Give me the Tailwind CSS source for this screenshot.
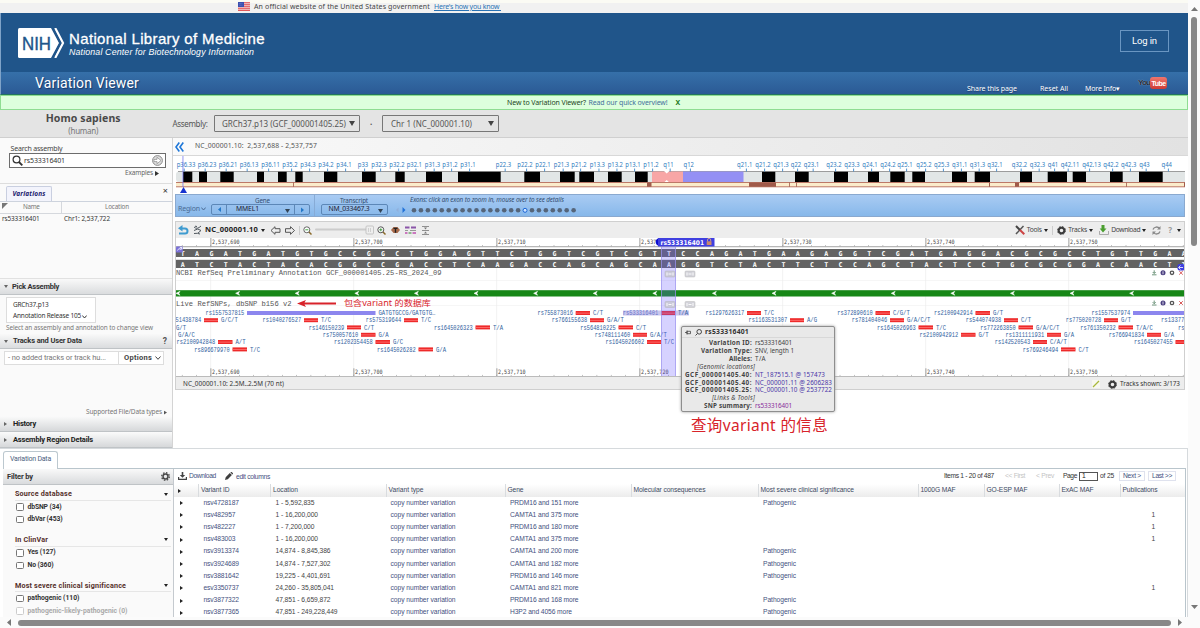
<!DOCTYPE html>
<html lang="en">
<head>
<meta charset="utf-8">
<title>Variation Viewer</title>
<script src="https://cdn.jsdelivr.net/npm/@tailwindcss/browser@4"></script>
</head>
<body class="bg-white">
<div class="grid h-[628px] w-[1200px] grid-cols-[1188px_12px] grid-rows-[617px_11px] overflow-hidden bg-white font-['Noto_Sans',sans-serif] text-[7px] leading-none text-[#444] whitespace-nowrap">

<main class="flex h-[617px] flex-col overflow-hidden">
  <!-- government banner -->
  <div class="flex h-[13px] shrink-0 items-center border-t-[3px] border-[#fbfbf4] bg-[#f1f1f1] pl-[238px] pb-[3px] text-[#444]">
    <svg class="mr-[4px] h-[9px] w-[12px] shrink-0" viewBox="0 0 12 9"><rect width="12" height="9" fill="#f3c9c9"/><path d="M0 .7h12M0 2.7h12M0 4.7h12M0 6.7h12M0 8.5h12" stroke="#e0575a" stroke-width="1"/><rect width="6" height="5" fill="#3b4fb0"/><path d="M1 1.5h4M1 3.2h4" stroke="#9fb0e0" stroke-width=".5" stroke-dasharray=".6 .7"/></svg>
    <span data-fit="176">An official website of the United States government</span>
    <span class="ml-[4px] text-[#2a73b5] underline" data-fit="67">Here's how you know&nbsp;</span>
  </div>

  <!-- NLM header -->
  <header class="flex h-[59px] shrink-0 items-center justify-between border-l border-[#7fa3c8] bg-[#20558a] pl-[17px] pr-[19px] text-white">
    <div class="flex items-center">
      <svg class="h-[30px] w-[47px]" viewBox="0 0 47 30"><path d="M1.5 0H33L41 15 33 30H1.5Q0 30 0 28.500V1.500Q0 0 1.500 0Z" fill="#fff"/><path d="M37.200 0l7.800 15-7.800 15" fill="none" stroke="#fff" stroke-width="2.200"/><path d="M34.600 0l7.800 15-7.800 15" fill="none" stroke="#20558a" stroke-width="1.600"/><text x="4" y="21.500" font-family="Liberation Sans" font-size="18.500" fill="#20558a" stroke="#20558a" stroke-width=".4" textLength="29" lengthAdjust="spacingAndGlyphs">NIH</text></svg>
      <div class="ml-[4px] mb-[-3px] flex flex-col font-['Liberation_Sans',sans-serif]">
        <span class="self-start text-[15px] leading-[16px] [-webkit-text-stroke:0.3px_white]" data-fit="196">National Library of Medicine</span>
        <span class="self-start text-[8.8px] leading-[11px] italic" data-fit="185">National Center for Biotechnology Information</span>
      </div>
    </div>
    <div class="mt-[-4px] flex h-[22px] w-[49px] items-center justify-center border border-[#6a96c2] text-[9.5px] text-white"><span class="font-['Roboto',sans-serif]" data-fit="25">Log in</span></div>
  </header>

  <!-- application title bar -->
  <div class="flex h-[23px] shrink-0 items-center border-b border-[#23765f] border-l border-l-[#7fa3c8] bg-gradient-to-b from-[#3670a9] to-[#2b5a95] pl-[34px] text-white">
    <span class="font-['Roboto',sans-serif] text-[14px] [text-shadow:1px_1px_1px_#16396a]" data-fit="104">Variation Viewer</span>
    <div class="ml-auto flex items-center pt-[10px] text-[7px] [text-shadow:0_1px_1px_#16396a]">
      <span class="w-[73px]"><span data-fit="50">Share this page</span></span>
      <span class="w-[45px]"><span data-fit="28">Reset All</span></span>
      <span class="w-[53px]"><span data-fit="35">More Info▾</span></span>
    </div>
    <!-- YouTube badge -->
    <div class="mr-[20px] flex h-[12px] w-[30px] shrink-0 items-center font-['Liberation_Sans',sans-serif] text-[8px] font-bold">
      <span class="w-[12px] text-[#1f2b3a] [text-shadow:0_0_1px_#b9c8d8]" data-fit="12">You</span>
      <span class="flex h-[12px] w-[17px] items-center justify-center rounded-[3px] bg-gradient-to-b from-[#f0756c] to-[#cf3a35] text-[7px] text-white"><span data-fit="14">Tube</span></span>
    </div>
  </div>

  <div class="flex h-[15px] shrink-0 items-center border border-[#8fdd92] bg-[#ddffdd] pl-[506px] text-[7px]">
    <span class="text-[#1d451d]" data-fit="79">New to Variation Viewer?</span>
    <span class="ml-[2.500px] text-[#44709c]" data-fit="79">Read our quick overview!</span>
    <span class="ml-[8px] font-bold text-[#1c7a1c]">X</span>
  </div>

  <!-- organism and assembly -->
  <div class="flex h-[28px] shrink-0 items-center border-b border-[#cfcfcf] bg-[#e4e4e4] text-[#555]">
    <div class="flex w-[172.500px] shrink-0 flex-col items-center">
      <span class="mr-[6px] text-[10.500px] leading-[13px] font-bold text-[#4a4a4a]" data-fit="75">Homo sapiens</span>
      <span class="mr-[6px] text-[8px] leading-[11px] text-[#777]" data-fit="30">(human)</span>
    </div>
    <span class="text-[8px]" data-fit="35">Assembly:</span>
    <div class="ml-[6.500px] flex h-[17px] w-[146px] items-center justify-between rounded-[1px] border border-[#777] pl-[7px] pr-[4px] text-[8px]"><span data-fit="124">GRCh37.p13 (GCF_000001405.25)</span><svg class="h-[5px] w-[6px]" viewBox="0 0 6 5"><path d="M0 0h6L3 5z" fill="#444"/></svg></div>
    <span class="w-[22px] text-center text-[8px] font-bold">·</span>
    <div class="flex h-[17px] w-[117px] items-center justify-between rounded-[1px] border border-[#777] pl-[8px] pr-[4px] text-[8px]"><span data-fit="81">Chr 1 (NC_000001.10)</span><svg class="h-[5px] w-[6px]" viewBox="0 0 6 5"><path d="M0 0h6L3 5z" fill="#444"/></svg></div>
  </div>

  <div class="flex h-[310px] shrink-0">
    <!-- left sidebar -->
    <aside class="flex w-[173px] shrink-0 flex-col border-r border-[#d4d4d4] bg-[#fafafa]">
      <div class="flex h-[46px] shrink-0 flex-col border-b border-[#ddd] pt-[6px] pl-[9px]">
        <span class="ml-[1.500px] text-[7px] leading-[9px] self-start" data-fit="52">Search assembly</span>
        <div class="flex h-[15px] w-[157px] items-center border border-[#6d6d6d] bg-white px-[2px]">
          <svg class="h-[11px] w-[11px]" viewBox="0 0 11 11" fill="none" stroke="#333"><circle cx="4.500" cy="4.500" r="3.400" stroke-width="1.200"/><path d="M7 7l3.300 3.300" stroke-width="1.800"/></svg>
          <span class="ml-[1px] text-[7px] text-[#333]" data-fit="41">rs533316401</span>
          <svg class="ml-auto h-[11px] w-[11px]" viewBox="0 0 11 11"><circle cx="5.500" cy="5.500" r="4.900" fill="#ddd" stroke="#8b8b8b" stroke-width="1"/><path d="M2 4.400h3V2.300l4 3.200-4 3.200V6.600H2z" fill="#fff" stroke="#8b8b8b" stroke-width=".7"/></svg>
        </div>
        <div class="mt-[2px] flex items-center pl-[116px] text-[6.500px] text-[#666]"><span data-fit="28">Examples</span><svg class="ml-[2px] h-[5px] w-[4px]" viewBox="0 0 4 5"><path d="M0 0l4 2.500L0 5z" fill="#333"/></svg></div>
      </div>
      <div class="flex h-[18px] shrink-0 items-end justify-between border-b border-[#cdd3dd] pl-[6px] pr-[4px]">
        <div class="flex h-[15px] w-[46px] items-center justify-center rounded-t-[2px] border border-b-0 border-[#c9cfe0] bg-[#f3f4fc] font-bold italic text-[#1a1a6e]"><span class="text-[6.500px]" data-fit="33">Variations</span></div>
        <span class="mb-[6px] text-[9px] text-[#333]">×</span>
      </div>
      <div class="flex h-[12px] shrink-0 border-b border-[#d5d8dd] text-[6.300px] text-[#777]">
        <div class="flex w-[62px] items-center border-r border-[#d5d8dd] pl-[2px]"><svg class="mb-[3px] h-[6px] w-[6px]" viewBox="0 0 6 6"><path d="M0 0h6L0 6z" fill="#777"/></svg><span class="ml-[15px]" data-fit="16.500">Name</span></div>
        <div class="flex flex-1 items-center justify-center"><span data-fit="24">Location</span></div>
      </div>
      <div class="flex h-[64px] shrink-0 pt-[2px] pl-[2px] text-[6.400px] text-[#333]"><span class="w-[62px]"><span data-fit="37.500">rs533316401</span></span><span data-fit="46">Chr1: 2,537,722</span></div>

      <div class="flex h-[17px] shrink-0 items-center border-t border-[#e1e1e1] border-b border-b-[#bfc3c6] bg-gradient-to-b from-[#f9f9f9] to-[#dadcde] pl-[4px] font-['Roboto',sans-serif] text-[7.500px] font-bold text-[#333]"><svg class="mr-[4px] h-[3px] w-[4px]" viewBox="0 0 4 3"><path d="M0 0h4L2 3z" fill="#666"/></svg><span data-fit="47">Pick Assembly</span></div>
      <div class="flex h-[39px] shrink-0 flex-col pl-[6px] pt-[2px]">
        <div class="flex h-[26px] w-[90px] flex-col justify-around border border-[#ddd] bg-white pt-[2px] pb-[1px] pl-[6px] text-[6.500px] text-[#333]"><span class="self-start" data-fit="35.500">GRCh37.p13</span><span class="flex items-center"><span data-fit="68">Annotation Release 105</span><svg class="ml-[1px] mt-[2px] h-[4px] w-[5px]" viewBox="0 0 5 4"><path d="M.3.5l2.200 2.500L4.700.5" fill="none" stroke="#333"/></svg></span></div>
        <span class="mt-[1.500px] self-start text-[6.400px] text-[#777]" data-fit="147">Select an assembly and annotation to change view</span>
      </div>
      <div class="flex h-[15px] shrink-0 items-center border-b border-[#bfc3c6] bg-gradient-to-b from-[#f9f9f9] to-[#dadcde] pl-[4px] pr-[5px] font-['Roboto',sans-serif] text-[7.500px] font-bold text-[#333]"><svg class="mr-[5px] h-[3px] w-[4px]" viewBox="0 0 4 3"><path d="M0 0h4L2 3z" fill="#666"/></svg><span data-fit="69">Tracks and User Data</span><span class="ml-auto text-[8.500px] text-[#555]">?</span></div>
      <div class="flex h-[67px] shrink-0 flex-col pl-[4px] pt-[2px]">
        <div class="flex h-[14px] w-[160px] border border-[#ddd] bg-white font-['Roboto',sans-serif]">
          <span class="flex w-[114px] items-center border-r border-[#ddd] pl-[3px] text-[7.500px] text-[#777]"><span data-fit="98">- no added tracks or track hu...</span></span>
          <span class="flex flex-1 items-center justify-between pl-[5px] pr-[2px] text-[7.500px] font-bold text-[#444]"><span data-fit="28">Options</span><svg class="h-[4px] w-[6px]" viewBox="0 0 6 4"><path d="M.5.5L3 3.300 5.500.5" fill="none" stroke="#444"/></svg></span>
        </div>
        <div class="mt-auto mb-[1px] flex items-center pl-[82px] text-[6.500px] text-[#777]"><span data-fit="76">Supported File/Data types</span><svg class="ml-[2px] mt-[1px] h-[5px] w-[3px]" viewBox="0 0 4 5"><path d="M0 0l4 2.500L0 5z" fill="#555"/></svg></div>
      </div>
      <div class="flex h-[16px] shrink-0 items-center border-b border-[#bfc3c6] bg-gradient-to-b from-[#fbfbfb] to-[#d6d8da] pl-[4px] font-['Roboto',sans-serif] text-[7.500px] font-bold text-[#222]"><svg class="mr-[6px] h-[4px] w-[3px]" viewBox="0 0 3 4"><path d="M0 0l3 2L0 4z" fill="#666"/></svg><span data-fit="23">History</span></div>
      <div class="flex h-[16px] shrink-0 items-center border-b border-[#bfc3c6] bg-gradient-to-b from-[#fbfbfb] to-[#d6d8da] pl-[4px] font-['Roboto',sans-serif] text-[7.500px] font-bold text-[#222]"><svg class="mr-[6px] h-[4px] w-[3px]" viewBox="0 0 3 4"><path d="M0 0l3 2L0 4z" fill="#666"/></svg><span data-fit="80">Assembly Region Details</span></div>
    </aside>

    <!-- genome browser -->
    <section class="flex w-[1015px] flex-col">
      <div class="flex h-[18px] shrink-0 items-center border-b border-[#d8d8d8] bg-gradient-to-r from-[#fafafa] via-[#eee] to-[#e2e2e2] pl-[2px] text-[#555]">
        <svg class="h-[10px] w-[9px]" viewBox="0 0 9 10" fill="none" stroke="#1f77d8" stroke-width="1.600"><path d="M4.300.5L1 5l3.300 4.500M8.300.5L5 5l3.300 4.500"/></svg>
        <span class="ml-[11px] text-[6.800px]" data-fit="122">NC_000001.10:&nbsp; 2,537,688 - 2,537,757</span>
      </div>
      <svg id="ideogram" class="h-[38px] w-[1015px] shrink-0" viewBox="173 156 1015 38"></svg>

      <div class="ml-[2px] flex h-[23px] w-[1010px] shrink-0 items-end border border-[#8aa9cf] bg-gradient-to-b from-[#a9cbf3] to-[#87b8ea] text-[7px] text-[#334e70]">
        <div class="mb-[3px] ml-[2px] flex h-[9px] w-[33px] items-center text-[#4a6a93]"><span data-fit="22">Region</span><svg class="ml-[1px] h-[4px] w-[5px]" viewBox="0 0 5 4"><path d="M.3.5l2.200 2.500L4.700.5" fill="none" stroke="#4a6a93"/></svg></div>
        <div class="flex h-full w-[104px] flex-col items-center border-r border-[#87abd6] text-[6.300px]">
          <span class="mt-[2.500px]" data-fit="15">Gene</span>
          <div class="mr-[4px] mt-auto flex h-[11px] w-[99px] mb-[1px] items-center rounded-[2px] border border-[#5c87b7] text-[6.800px] text-[#223]"><span class="flex h-full w-[15px] items-center justify-center border-r border-[#5c87b7]"><svg class="h-[5px] w-[3px]" viewBox="0 0 3 5"><path d="M3 0v5L0 2.500z" fill="#2478c8"/></svg></span><span class="flex h-full flex-1 items-center justify-between pl-[9px] pr-[4px]"><span data-fit="23">MMEL1</span><svg class="mt-[2px] h-[4px] w-[5px]" viewBox="0 0 5 4"><path d="M0 0h5L2.500 4z" fill="#345"/></svg></span><span class="flex h-full w-[15px] items-center justify-center border-l border-[#5c87b7]"><svg class="h-[6px] w-[3px]" viewBox="0 0 3 5"><path d="M0 0v5l3-2.500z" fill="#2478c8"/></svg></span></div>
        </div>
        <div class="flex h-full w-[78px] flex-col items-center text-[6.300px]">
          <span class="mt-[2.500px]" data-fit="28">Transcript</span>
          <div class="mt-auto mb-[1px] flex h-[11px] w-[67px] items-center justify-between rounded-[2px] border border-[#5c87b7] pl-[7px] pr-[4px] text-[6.800px] text-[#223]"><span data-fit="41">NM_033467.3</span><svg class="mt-[2px] h-[4px] w-[5px]" viewBox="0 0 5 4"><path d="M0 0h5L2.500 4z" fill="#345"/></svg></div>
        </div>
        <div class="flex h-full flex-col pl-[2px]">
          <span class="mt-[2px] ml-[15px] self-start text-[6.300px] italic" data-fit="154">Exons: click an exon to zoom in, mouse over to see details</span>
          <svg id="exons" class="mt-auto mb-[2px] h-[8px] w-[184px]" viewBox="395 206 184 8"></svg>
        </div>
      </div>

      <div class="mt-[4px] ml-[2px] flex h-[169px] w-[1010px] shrink-0 flex-col border border-[#cfcfcf]">
        <div class="flex h-[16px] shrink-0 items-center bg-[#ededed] pl-[2px] pr-[3px] text-[6.700px] text-[#444]">
          <svg class="h-[10px] w-[11px]" viewBox="0 0 11 10" fill="none" stroke="#3f9bd0" stroke-width="2"><path d="M1 8.500h6a2.500 2.500 0 0 0 0-5H3"/><path d="M4.500 0v6.500L0 3.300z" fill="#3f9bd0" stroke="none"/></svg>
          <svg class="ml-[4px] h-[10px] w-[9px]" viewBox="0 0 9 10" fill="none" stroke="#50585f" stroke-width="1"><path d="M1 2q3 3 7-1M1 5.500q4-3 7 0M1 8.500q4 1 7-3M2 1.200l2 .3M5 8.500l2 .5"/></svg>
          <span class="ml-[3px] text-[7.500px] font-bold text-[#222]" data-fit="53">NC_000001.10</span>
          <svg class="ml-[3px] h-[3px] w-[4px]" viewBox="0 0 4 3"><path d="M0 0h4L2 3z" fill="#222"/></svg>
          <svg class="ml-[5px] h-[9px] w-[26px]" viewBox="0 0 26 9" fill="none" stroke="#555" stroke-width="1"><path d="M1 4.500L5 .7v2h5v3.600H5v2zM24.500 4.500l-4-3.800v2h-5v3.600h5v2z"/></svg>
          <span class="mx-[3px] h-[9px] w-px bg-[#ccc]"></span>
          <svg class="h-[9px] w-[9px]" viewBox="0 0 9 9" fill="none" stroke="#666"><circle cx="3.800" cy="3.800" r="3" fill="#fff"/><path d="M2.300 3.800h3" stroke="#4a4"/><path d="M6 6l2.500 2.500" stroke="#8a6a2a" stroke-width="1.500"/></svg>
          <svg class="ml-[3px] h-[10px] w-[59px]" viewBox="0 0 59 10"><rect x="0" y="3.500" width="52" height="2" rx="1" fill="#ccc"/><rect x="51" y="1" width="7.500" height="8" rx="1" fill="#eee" stroke="#bbb" stroke-width=".8"/><path d="M53.500 3v4M55.500 3v4" stroke="#bbb" stroke-width=".6"/></svg>
          <svg class="ml-[3px] h-[9px] w-[9px]" viewBox="0 0 9 9" fill="none" stroke="#555"><circle cx="3.800" cy="3.800" r="3" fill="#fff"/><path d="M2.300 3.800h3M3.800 2.300v3" stroke="#494"/><path d="M6 6l2.500 2.500" stroke="#8a6a2a" stroke-width="1.500"/></svg>
          <svg class="ml-[5px] h-[8px] w-[9px]" viewBox="0 0 9 8"><path d="M0 4l2.500-3h4L9 4 6.500 7h-4z" fill="#a86a4a"/><path d="M2.500 2.300h4M4.500 2.300v4.500" stroke="#222" stroke-width="1.300"/></svg>
          <svg class="ml-[5px] h-[8px] w-[11px]" viewBox="0 0 11 8"><path d="M0 1.500h4.500M6 1.500h5" stroke="#8a55a8" stroke-width="2"/><path d="M0 4.500h3M5 4.500h6" stroke="#999"/><path d="M0 7h2.500M7.500 7H11" stroke="#c050b0" stroke-width="1.300"/><path d="M3.500 7h3" stroke="#5a9a5a" stroke-width="1.300"/></svg>
          <svg class="ml-[6px] h-[9px] w-[7px]" viewBox="0 0 7 9" stroke="#777" fill="#777"><path d="M0 .5h7M0 4.500h7M0 8.500h7" stroke-width=".8"/><path d="M2 1.500h3L3.500 3.500zM2 7.500h3L3.500 5.500z" stroke="none"/></svg>

          <svg class="ml-auto h-[10px] w-[10px]" viewBox="0 0 10 10" fill="none"><path d="M1 9l7.500-8" stroke="#555" stroke-width="1.500"/><path d="M1 1l4 4" stroke="#444" stroke-width="2"/><path d="M5 5l4.300 4.200" stroke="#c44" stroke-width="2"/></svg>
          <span class="ml-[2px]" data-fit="15">Tools</span><svg class="ml-[2px] h-[3px] w-[4px]" viewBox="0 0 4 3"><path d="M0 0h4L2 3z" fill="#222"/></svg>
          <span class="ml-[4px] mr-[4px] h-[9px] w-px bg-[#ccc]"></span>
          <svg class="h-[9px] w-[9px]" viewBox="-5 -5 10 10"><circle r="3.100" fill="none" stroke="#3c3c3c" stroke-width="2.200"/><circle r="4.400" fill="none" stroke="#3c3c3c" stroke-width="1.100" stroke-dasharray="1.900 1.550"/></svg>
          <span class="ml-[2.500px]" data-fit="19">Tracks</span><svg class="ml-[2px] h-[3px] w-[4px]" viewBox="0 0 4 3"><path d="M0 0h4L2 3z" fill="#222"/></svg>
          <svg class="ml-[6px] h-[10px] w-[10px]" viewBox="0 0 10 10"><path d="M.5 6v3.500h9V6" fill="#eee" stroke="#999" stroke-width=".8"/><path d="M2.500 0h3v3.500h2L4 7.500.7 3.500h1.800z" fill="#4a9e2f"/></svg>
          <span class="ml-[2px]" data-fit="29">Download</span><svg class="ml-[2px] h-[3px] w-[4px]" viewBox="0 0 4 3"><path d="M0 0h4L2 3z" fill="#222"/></svg>
          <svg class="ml-[6px] h-[9px] w-[9px]" viewBox="0 0 9 9" fill="none" stroke="#888" stroke-width="1.300"><path d="M1 3.500C2 .5 6 .3 7.500 2.500M8 5.500C7 8.500 3 8.700 1.500 6.500"/><path d="M8.500 0v3.500H5zM.5 9V5.500H4z" fill="#888" stroke="none"/></svg>
          <span class="ml-[7px] text-[8px] font-bold text-[#999]">?</span><svg class="ml-[5px] h-[3px] w-[4px]" viewBox="0 0 4 3"><path d="M0 0h4L2 3z" fill="#222"/></svg>
        </div>
        <svg id="tracks" class="h-[138px] w-[1008px] shrink-0 bg-white" viewBox="176 238 1008 138"></svg>
        <div class="flex flex-1 items-center border-t border-[#bbb] bg-[#ededed] pl-[7px] pr-[4px] pt-[2px] text-[6.400px] text-[#333]">
          <span data-fit="101">NC_000001.10: 2.5M..2.5M (70 nt)</span>
          <svg class="ml-auto h-[8px] w-[8px]" viewBox="0 0 8 8"><rect width="8" height="8" fill="#f8f8f0"/><path d="M1 7l6-6" stroke="#a9b83a" stroke-width="1.300"/></svg>
          <svg class="ml-[8px] h-[9px] w-[9px]" viewBox="-5 -5 10 10"><circle r="3.100" fill="none" stroke="#3c3c3c" stroke-width="2.200"/><circle r="4.400" fill="none" stroke="#3c3c3c" stroke-width="1.100" stroke-dasharray="1.900 1.550"/></svg>
          <span class="ml-[3px]" data-fit="60">Tracks shown: 3/173</span>
        </div>
      </div>
      <div class="relative h-0 w-0">
        <!-- variant tooltip and its caption -->
        <div class="absolute -top-[64px] left-[508px] h-[86px] w-[154px] rounded-[2px] border border-[#8e8e8e] bg-[#e9e9e9] shadow-[0_0_3px_#999] text-[6.300px] text-[#444]">
          <div class="flex h-[11px] items-center border-b border-[#d8d8d8] pl-[3px] font-bold text-[#333]"><svg class="h-[5px] w-[6px]" viewBox="0 0 6 5"><path d="M0 2.500h2M2 .5v4M2 1.300h3.500v2.400H2z" fill="none" stroke="#444" stroke-width=".8"/></svg><svg class="ml-[4px] h-[7px] w-[7px]" viewBox="0 0 7 7" fill="none" stroke="#444"><circle cx="4.200" cy="2.800" r="2.300"/><path d="M2.500 4.500L.5 6.500"/></svg><span class="ml-[3px] text-[6.800px]" data-fit="44">rs533316401</span></div>
          <div class="grid grid-cols-[70px_80px] gap-x-[3px] pt-[1px] leading-[7.900px]">
            <b class="text-right" data-fit="43">Variation ID:</b><span data-fit="37">rs533316401</span>
            <b class="text-right" data-fit="51">Variation Type:</b><span data-fit="39">SNV, length 1</span>
            <b class="text-right" data-fit="23">Alleles:</b><span data-fit="11">T/A</span>
            <i class="-mr-[3px] text-right" data-fit="58">[Genomic locations]</i><span></span>
            <b class="text-right" data-fit="67">GCF_000001405.40:</b><span class="text-[#4a35a8]" data-fit="70">NT_187515.1 @ 157473</span>
            <b class="text-right" data-fit="67">GCF_000001405.40:</b><span class="text-[#4a35a8]" data-fit="77">NC_000001.11 @ 2606283</span>
            <b class="text-right" data-fit="67">GCF_000001405.25:</b><span class="text-[#4a35a8]" data-fit="77">NC_000001.10 @ 2537722</span>
            <i class="-mr-[3px] text-right" data-fit="43">[Links &amp; Tools]</i><span></span>
            <b class="text-right" data-fit="48">SNP summary:</b><span class="text-[#8a2f9c]" data-fit="37">rs533316401</span>
          </div>
        </div>
        <div class="absolute top-[25px] left-[518px] font-['Noto_Sans','Noto_Sans_CJK_SC',sans-serif] text-[15.500px] leading-[20px] text-[#d8232a]"><span data-fit="137">查询variant 的信息</span></div>
      </div>
    </section>
  </div>

  <!-- variation data -->
  <div class="flex min-h-0 flex-1 flex-col border-t border-r border-[#d6dadd] bg-white pl-[3px]">
    <div class="flex h-[19px] shrink-0 items-end"><div class="z-10 mb-[-1px] flex h-[18px] w-[55px] items-center justify-center rounded-t-[3px] border border-b-0 border-[#bcc8cf] bg-white pb-[2px] font-['Roboto',sans-serif] text-[7px] text-[#4c5f80]"><span data-fit="41">Variation Data</span></div></div>
    <div class="mr-[1px] flex min-h-0 flex-1 border-t border-r border-[#b9c5cc]">
      <div class="flex w-[171px] shrink-0 flex-col border-r border-[#c5cacf] bg-[#fafafa] font-['Roboto',sans-serif] font-bold text-[#333]">
        <div class="flex h-[16px] shrink-0 items-center justify-between border-b border-[#bfc3c6] bg-gradient-to-b from-[#f9f9f9] to-[#d9dbdd] pl-[4px] pr-[3px] text-[7.500px]"><span data-fit="26">Filter by</span><svg class="h-[9px] w-[9px]" viewBox="-5 -5 10 10"><circle r="2.700" fill="none" stroke="#4a4a4a" stroke-width="1.700"/><circle r="4.200" fill="none" stroke="#4a4a4a" stroke-width="1.500" stroke-dasharray="1.700 1.600"/></svg></div>
        <div id="facets" class="flex flex-col pl-[12px]"></div>
      </div>
      <div class="flex min-w-0 flex-1 flex-col font-['Liberation_Sans',sans-serif] text-[6.700px] text-[#44507e]">
        <div class="flex h-[15px] shrink-0 items-center pb-[1px] pl-[4px] pr-[9px]">
          <svg class="h-[8px] w-[9px]" viewBox="0 0 9 8"><path d="M.6 5v2.400h7.800V5" fill="none" stroke="#444" stroke-width="1.200"/><path d="M3.700 0h1.600v3h1.900L4.500 5.700 1.800 3h1.900z" fill="#444"/></svg>
          <span class="ml-[2px]" data-fit="27">Download</span>
          <svg class="ml-[9px] h-[8px] w-[8px]" viewBox="0 0 8 8"><path d="M0 8l.7-2.800L4.800 1l2.100 2.100-4.100 4.200zM5.400.5L6 0q.5-.2.900.2l.9.9q.4.400.1.800l-.5.700z" fill="#3e3e3e"/></svg>
          <span class="ml-[3px] mt-[2px]" data-fit="34">edit columns</span>
          <span class="ml-auto text-[#333]" data-fit="50">Items 1 - 20 of 487</span>
          <span class="ml-[11px] w-[31px] text-[#c4c4c4]"><span data-fit="20">&lt;&lt; First</span></span>
          <span class="w-[27px] text-[#c4c4c4]"><span data-fit="18">&lt; Prev</span></span>
          <span class="text-[#333]" data-fit="14">Page</span><span class="ml-[2px] mr-[2px] flex h-[9px] w-[19px] items-center border border-[#555] pl-[2px] text-[#222]">1</span><span class="text-[#333]" data-fit="14">of 25</span>
          <span class="ml-[5px] flex h-[10px] w-[26px] items-center justify-center border border-[#dfe2ee]"><span data-fit="18">Next &gt;</span></span>
          <span class="ml-[3px] flex h-[10px] w-[28px] items-center justify-center border border-[#dfe2ee]"><span data-fit="20">Last &gt;&gt;</span></span>
        </div>
        <div id="thead" class="grid h-[13px] shrink-0 grid-cols-[24px_72px_115.500px_119px_126px_127px_160px_66px_75px_61px_65px] bg-gradient-to-b from-white to-[#ececec] text-[6.700px] text-[#3d4a63]"></div>
        <div id="tbody" class="flex flex-col"></div>
      </div>
    </div>
  </div>
</main>

<!-- vertical scrollbar -->
<div class="flex flex-col items-center bg-[#fbfbfb] pt-[7px]">
  <svg class="h-[4px] w-[7px] shrink-0" viewBox="0 0 7 4"><path d="M0 4h7L3.500 0z" fill="#777"/></svg>
  <div class="mt-[6px] h-[229px] w-[6px] rounded-full bg-[#888]"></div>
  <svg class="mt-auto mb-[8px] h-[4px] w-[7px]" viewBox="0 0 7 4"><path d="M0 0h7L3.500 4z" fill="#777"/></svg>
</div>
<!-- horizontal scrollbar -->
<div class="col-span-2 flex items-center bg-[#fbfbfb] pl-[7px]">
  <svg class="h-[7px] w-[4px]" viewBox="0 0 4 7"><path d="M4 0v7L0 3.500z" fill="#777"/></svg>
  <div class="ml-[7px] h-[6px] w-[1153px] rounded-full bg-[#888]"></div>
  <svg class="ml-[7px] h-[7px] w-[4px]" viewBox="0 0 4 7"><path d="M0 0v7l4-3.500z" fill="#777"/></svg>
</div>
</div>

<script>
const el = id => document.getElementById(id);
const txt = (x, y, s, o = {}) => `<text x="${x}" y="${y}" font-family="${o.f || 'Noto Sans'}" font-size="${o.z || 6.5}" fill="${o.c || '#444'}"${o.w ? ` textLength="${o.w}" lengthAdjust="spacingAndGlyphs"` : ''}${o.a ? ` text-anchor="${o.a}"` : ''}${o.b ? ' font-weight="bold"' : ''}>${s}</text>`;
const rect = (x, y, w, h, c, e = '') => `<rect x="${x}" y="${y}" width="${w}" height="${h}" fill="${c}" ${e}/>`;

// chromosome ideogram
{
  const bands = [[183,192.3],[199,207],[220.3,233.7],[257,264],[278,286.7],[295.3,302.7],[324,337.3],[362,375.7],[395.3,404.7],[426,442],[458,500.7],[524.3,540],[560,574.7],[579.3,594],[608,621.7],[635,647.7],[762,775.3],[795,808.7],[834,848],[868,879],[890.3,904.7],[912.3,925],[952,967],[974.7,990],[1020,1032],[1047.7,1067],[1072.7,1086],[1110,1122.7],[1139,1162.7]];
  const labels = [['p36.33',186],['p36.23',207],['p36.21',228],['p36.13',249],['p36.11',270.5],['p35.2',290],['p34.3',308],['p34.2',326],['p34.1',344],['p33',363],['p32.3',379],['p32.2',397],['p32.1',414.3],['p31.3',432.5],['p31.2',450],['p31.1',468],['p22.3',503.5],['p22.2',525],['p22.1',543],['p21.3',561.5],['p21.2',579],['p13.3',597.3],['p13.2',615.3],['p13.1',633],['p11.2',651],['q11',668.5],['q12',688.7],['q21.1',744.7],['q21.2',763],['q21.3',781],['q22',796],['q23.1',811.5],['q23.2',834],['q23.3',852],['q24.1',870],['q24.2',888],['q25.1',905],['q25.2',924],['q25.3',941.7],['q31.1',959.7],['q31.3',977.5],['q32.1',995],['q32.2',1019.5],['q32.3',1037.5],['q41',1053],['q42.11',1070],['q42.13',1091.5],['q42.2',1111],['q42.3',1128.7],['q43',1144.5],['q44',1166.7]];
  let s = rect(176, 171.5, 1009, 10.5, '#e2e6e6', 'rx="3"') + rect(180, 171.5, 1005, 10.5, '#e2e6e6');
  s += '<path d="M178 171.500H1185" stroke="#888" stroke-width=".8"/>';
  bands.forEach(([a, b]) => s += rect(a, 171.8, b - a, 10.2, '#000'));
  s += rect(652, 171.5, 31, 10.5, '#f8a6a6') + rect(683, 171.5, 60.5, 10.5, '#9490f4');
  s += '<path d="M664 171l2.700 2.500 2.700-2.500zM664 182.500l2.700-2.500 2.700 2.500z" fill="#fff"/>';
  s += rect(176, 182.8, 1009, 4, '#fbeccb') + '<path d="M176 182.500h1009M176 186.800h1009" stroke="#b56a58" stroke-width=".9"/>';
  [[293,.8],[647,4.5],[749,27],[789,.8],[796,.8],[989,1],[1015,4],[1126,.8],[1184,1]].forEach(([x, w]) => s += rect(x, 182.5, w, 4.3, '#a05a4a'));
  labels.forEach(([t, x]) => { const w = t.replace('.', '').length * 3.45 + (t.includes('.') ? 1.5 : 0); s += txt(x - w / 2, 166.8, t, {c: '#2f7cc0', w, z: 6.6}); s += rect(x - .3 + (t.length > 5 ? -2 : 1.5), 168.5, .9, 3, '#3c86c8'); });
  s += rect(182, 156, 1.8, 31, '#7a7af0', 'opacity=".45"') + '<path d="M183.500 187l3.500 6h-7z" fill="#1733d0"/>';
  el('ideogram').innerHTML = s;
}

// exon dots
{
  let s = '<path d="M398.500 207.500v5l-2.500-2.500z" fill="#8fb0dc"/><path d="M402.500 207v6l3-3z" fill="#2272d8"/>';
  for (let i = 0; i < 24; i++) { const x = 414 + i * 6.94; s += i === 16 ? `<circle cx="${x}" cy="210.300" r="2" fill="#cfe4ff" stroke="#1a66d8" stroke-width="1"/>` : `<circle cx="${x}" cy="210.300" r="2.300" fill="#55657a"/>`; }
  el('exons').innerHTML = s;
}

// sequence tracks
{
  const P = 14.3, X0 = 210.5, MONO = 'Liberation Mono';
  let s = '';
  const ruler = (y, base) => {
    s += rect(176, base, 1008, .9, '#999');
    for (let i = -2; i < 69; i++) s += rect(X0 + i * P, base - 1.3, .6, 1.3, '#999');
    for (let i = 0; i < 7; i++) { const x = X0 + i * 143; s += rect(x, y - 6, .8, base - y + 6, '#888') + txt(x + 1.5, y, '2,537,' + (690 + 10 * i), {f: 'DejaVu Sans Mono', z: 6, w: 27.5}); }
  };
  for (let i = 0; i < 7; i++) s += rect(X0 + i * 143, 247, .6, 128, '#e9e9e9');
  [281.5, 306].forEach(y => s += rect(176, y - 1, 1008, .5, '#ededed'));
  ruler(244, 246.3);
  ruler(374.3, 376.2);
  s += rect(176, 249, 1008, 8, '#636363') + rect(176, 259.8, 1008, 8.2, '#636363');
  const seq = 'TAGATGATGTGCCGGCTGGAGTTCTGGTCGTCGTTCCAGATGAAGAGGTCGATGAGGACGCGCCTGTTGAA', comp = {A: 'T', T: 'A', G: 'C', C: 'G'};
  [...seq].forEach((c, i) => { const x = 182.8 + i * P; s += txt(x, 255.6, c, {f: 'DejaVu Sans Mono', z: 6.6, c: '#fff', a: 'middle', b: 1}) + txt(x, 266.5, comp[c], {f: 'DejaVu Sans Mono', z: 6.6, c: '#fff', a: 'middle', b: 1}); });
  s += txt(176, 275.3, 'NCBI RefSeq Preliminary Annotation GCF_000001405.25-RS_2024_09', {f: MONO, z: 6.8, w: 265.5, c: '#555'});
  s += rect(176, 290.2, 1008, 6.3, '#178717');
  for (let x = 176; x < 1184; x += 59.6) s += `<path d="M${x + 4} 291.300l-4 2 4 2-1.200-2z" fill="#fff" stroke="#fff" stroke-width=".5"/>`;
  s += txt(176, 305.8, 'Live RefSNPs, dbSNP b156 v2', {f: MONO, z: 6.8, w: 115.5, c: '#555'});
  s += '<path d="M297 303.500l9-3.500-1.500 2.500H336v2h-31.500l1.500 2.500z" fill="#d8232a"/>';
  s += txt(344, 306, '包含variant 的数据库', {f: "Noto Sans, Noto Sans CJK SC", z: 8.4, c: '#d8232a', w: 87});

  const snp = (row, name, a, b, al, kind) => {
    const y = [313, 320.2, 327.4, 334.8, 342, 349.4][row], w = name.length * 3.22;
    if (name) s += txt(a - 2.8 - w, y + 2.2, name, {f: MONO, z: 6.6, c: kind === 2 ? '#6a76c8' : '#3262a0', w});
    if (b) s += kind === 1 ? rect(a, y - 2, b - a, 4, '#8c86ee') : rect(a, y - 2, b - a, 4, '#ee2a2a') + rect(a, y - .3, b - a, .8, '#f77');
    if (al) s += txt((b || a) + 3, y + 2.2, al, {f: MONO, z: 6.6, c: '#3262a0', w: al.length * 3.35});
  };
  s += rect(623, 310.5, 66, 5, '#c9c6ee');
  [[0,'rs1557537815',247,375.5,'GATGTGCCG/GATGTG…',1],[0,'rs755873016',575.7,590,'C/T'],[0,'rs533316401',661,675,'T/A',2],[0,'rs1297626317',747,761,'T/C'],[0,'rs372890610',875.5,890,'C/G/T'],[0,'rs2100942914',975.5,990,'G/T'],[0,'rs1557537974',1133,1184,'',1],
   [1,'51438784',204,218,'G/C/T'],[1,'rs1040276527',304,318,'T/C'],[1,'rs575319644',404,418,'T/C'],[1,'rs766155638',590,604,'G/A/T'],[1,'rs1163531307',790,804,'A/G'],[1,'rs781404046',890,904,'G/A/C/T'],[1,'rs544074938',1004,1018,'C/T'],[1,'rs775020728',1104,1118,'G/T'],[1,'',1158,0,'rs13377'],
   [2,'',173,0,'G/T'],[2,'rs146150239',347,361,'C/T'],[2,'rs1645026323',475.5,490,'T/A'],[2,'rs564810225',618.5,633,'C/T'],[2,'rs1645026963',918.5,933,'T/C'],[2,'rs772263850',1018.5,1033,'G/A/C/T'],[2,'rs761350232',1118.5,1133,'T/A/C'],[2,'',1175,0,'rs'],
   [3,'',175,0,'G/A/C'],[3,'rs750057610',361,375.5,'G/A'],[3,'rs748111460',633,647,'G/A/T'],[3,'rs2100942912',961,975.5,'G/T'],[3,'rs1311111931',1047,1061,'G/A'],[3,'rs766941834',1147,1161,'G/A'],
   [4,'rs2100942848',218,232.5,'A/T'],[4,'rs1202354458',375.5,390,'G/C'],[4,'rs1645026602',647,661,'T/C'],[4,'rs142520543',1033,1047,'C/A/T'],[4,'rs1645027455',1175.5,1184,''],
   [5,'rs896679970',232.5,247,'T/C'],[5,'rs1645026282',418.5,433,'G/A'],[5,'rs769246494',1061,1075.5,'C/T']].forEach(r => snp(...r));
  // selected position marker
  s += rect(661, 247, 15, 129, '#6a5cff', 'opacity=".28"') + rect(661, 247, .7, 129, '#9c96ee') + rect(675.3, 247, .7, 129, '#9c96ee');
  s += '<circle cx="659.500" cy="241.900" r="3.700" fill="#0d0dd0"/>' + rect(658, 237.3, 56.5, 9.2, '#3f3fe0') + txt(660.5, 244.8, 'rs533316401', {f: 'DejaVu Sans', z: 6.5, c: '#fff', w: 43.5, b: 1});
  s += '<path d="M707.500 241.500v-1.500a1.600 1.600 0 0 1 3.200 0v1.500" fill="none" stroke="#d9a08a" stroke-width=".9"/>' + rect(706.7, 241.3, 4.8, 3.7, '#c98a6a');
  [[665,271],[685,271],[665,301.5],[685,301.5]].forEach(([x, y]) => s += rect(x, y, 10, 6, '#c8c8d0', 'rx="1" opacity=".8" stroke="#aaa" stroke-width=".5"') + `<path d="M${x + 2} ${y + 1.5}v3M${x + 8} ${y + 1.5}v3M${x + 3.5} ${y + 3}h3" stroke="#fff" stroke-width=".9"/>`);
  [272.800, 303].forEach(y => {
    s += `<path d="M1154.200 ${y - 2.500}v3M1152.700 ${y - .8}l1.500 1.500 1.500-1.500M1152 ${y + 2}h4.500" fill="none" stroke="#4a7a5a" stroke-width=".8"/><circle cx="1163" cy="${y}" r="2.500" fill="#4a3f80"/><path d="M1163 ${y - 1.500}v3" stroke="#fff" stroke-width=".8"/><circle cx="1172" cy="${y}" r="1.700" fill="none" stroke="#555" stroke-width="1.300"/><path d="M1179.200 ${y - 1.800}l3.600 3.600M1182.800 ${y - 1.800}l-3.600 3.600" stroke="#d34848" stroke-width=".9"/>`;
  });
  s += rect(176, 246.500, 6.800, 6, '#7a70d8', 'rx="1"') + '<path d="M177.500 250.500q1.500-3 2.500-1.500t1.500-1.500M179.800 247.500h2v2" fill="none" stroke="#fff" stroke-width=".8"/>';
  s += rect(1177.500, 264, 7, 6.500, '#3f3fe0', 'rx="2"') + '<path d="M1179 267.500h4M1180.500 265.500l-2 2 2 2" fill="none" stroke="#fff" stroke-width=".8"/>';
  el('tracks').innerHTML = s;
}

// filters
el('facets').innerHTML = [['Source database', 57, [['dbSNP (34)', 34], ['dbVar (453)', 35]]], ['In ClinVar', 33, [['Yes (127)', 28], ['No (360)', 26]]], ['Most severe clinical significance', 111, [['pathogenic (110)', 52], ['pathogenic-likely-pathogenic (0)', 100]]]].map(([h, w, items]) =>
  `<div class="h-[45.700px] pt-[3px]"><div class="mr-[2px] flex h-[13px] items-center justify-between border-b border-[#e6e6e6] pr-[3px] text-[7.200px] text-[#55302a]"><span data-fit="${w}">${h}</span><svg class="h-[3px] w-[4px]" viewBox="0 0 4 3"><path d="M0 0h4L2 3z" fill="#222"/></svg></div>` +
  items.map(([t, tw]) => `<div class="flex h-[12.400px] items-center text-[6.800px] ${t.endsWith('(0)') ? 'text-[#aaa]' : 'text-[#333]'}"><span class="mr-[4px] ml-[1px] h-[7.500px] w-[7.500px] rounded-[1.500px] border bg-white ${t.endsWith('(0)') ? 'border-[#ccc]' : 'border-[#777]'}"></span><span data-fit="${tw}">${t}</span></div>`).join('') + '</div>').join('');

// variant table
el('thead').innerHTML = [['', 0], ['Variant ID', 28.5], ['Location', 25], ['Variant type', 35], ['Gene', 16], ['Molecular consequences', 72], ['Most severe clinical significance', 93.5], ['1000G MAF', 35], ['GO-ESP MAF', 41], ['ExAC MAF', 32], ['Publications', 35]].map(([t, w], i) =>
  i ? `<div class="flex items-center border-l border-[#d9dcdf] pl-[2px]"><span data-fit="${w}">${t}</span></div>` : '<div class="flex items-center pl-[4px]"><svg class="h-[4px] w-[3px]" viewBox="0 0 3 4"><path d="M0 0l3 2L0 4z" fill="#222"/></svg></div>').join('');
el('tbody').innerHTML = [['nsv4728187','1 - 5,592,835','PRDM16 and 151 more',1,0],['nsv482957','1 - 16,200,000','CAMTA1 and 375 more',0,1],['nsv482227','1 - 7,200,000','PRDM16 and 180 more',0,1],['nsv483003','1 - 16,200,000','CAMTA1 and 375 more',0,1],['nsv3913374','14,874 - 8,845,386','CAMTA1 and 200 more',1,0],['nsv3924689','14,874 - 7,527,302','CAMTA1 and 182 more',1,0],['nsv3881642','19,225 - 4,401,691','PRDM16 and 146 more',1,0],['esv3350737','24,260 - 35,805,041','CAMTA1 and 821 more',0,1],['nsv3877322','47,851 - 6,659,872','PRDM16 and 168 more',1,0],['nsv3877365','47,851 - 249,228,449','H3P2 and 4056 more',1,0]].map(([id, loc, gene, path, pub]) =>
  `<div class="grid h-[12.200px] grid-cols-[24px_72px_115.500px_119px_126px_127px_160px_202px_65px] items-center"><span class="flex items-center pl-[6px]"><svg class="h-[4px] w-[3px]" viewBox="0 0 3 4"><path d="M0 0l3 2L0 4z" fill="#222"/></svg></span><span class="pl-[5.500px]"><span data-fit="${(id.length * 3.55).toFixed(1)}">${id}</span></span><span class="pl-[5.500px] text-[#444]"><span data-fit="${({13: 39, 14: 42.5, 18: 55, 19: 58.5, 20: 62})[loc.length]}">${loc}</span></span><span class="pl-[5px]"><span data-fit="65">copy number variation</span></span><span class="pl-[5.500px]"><span data-fit="${gene.startsWith('H') ? 62 : 68.5}">${gene}</span></span><span></span><span class="pl-[5.500px]">${path ? '<span data-fit="33">Pathogenic</span>' : ''}</span><span></span><span class="pl-[32px] text-[#444]">${pub ? '1' : ''}</span></div>`).join('');

const fit = () => {
  if (getComputedStyle(document.querySelector('main')).display !== 'flex') return;
  const nodes = [...document.querySelectorAll('[data-fit]')];
  nodes.forEach(n => n.style.letterSpacing = '0px');
  const widths = nodes.map(n => { const r = document.createRange(); r.selectNodeContents(n); return r.getBoundingClientRect().width; });
  nodes.forEach((n, i) => n.style.letterSpacing = ((+n.dataset.fit - widths[i]) / n.textContent.length).toFixed(3) + 'px');
};
fit();
addEventListener('load', fit);
new ResizeObserver(fit).observe(document.body);
[0, 50, 200].forEach(t => setTimeout(fit, t));
</script>
</body>
</html>
